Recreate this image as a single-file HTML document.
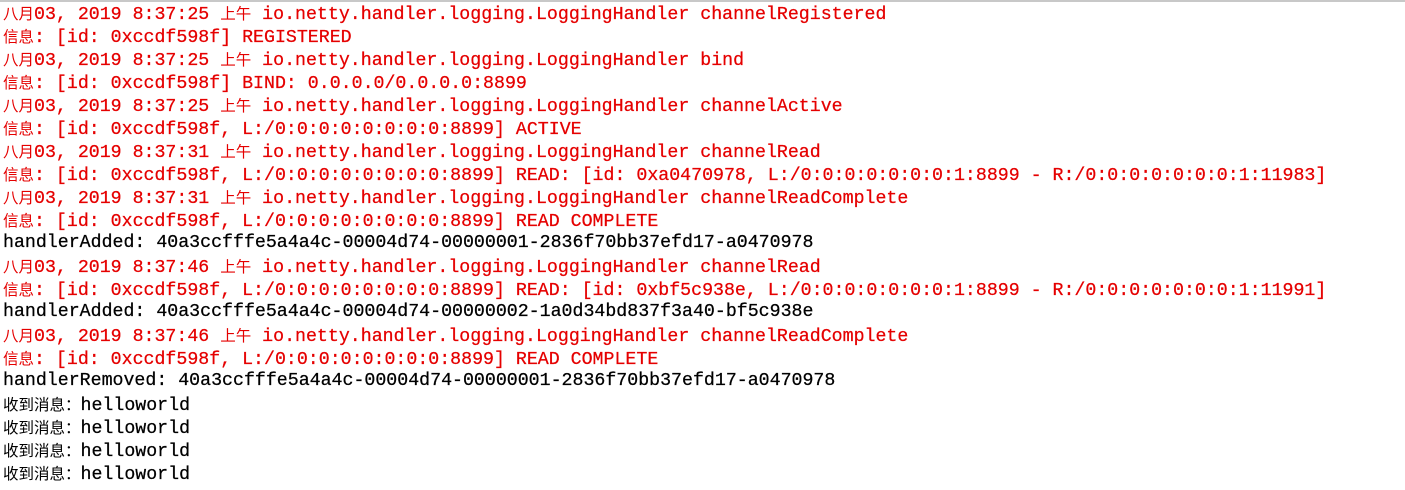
<!DOCTYPE html>
<html><head><meta charset="utf-8"><style>
html,body{margin:0;padding:0;background:#fff;width:1405px;height:490px;overflow:hidden}
body{border-top:2px solid #c8c8c8;box-sizing:border-box}
.c{font-family:"Liberation Mono",monospace;font-size:18.25px;line-height:23px;padding-left:3px;margin-top:0;-webkit-text-stroke:0.25px currentColor}
.l{height:23px;white-space:pre}
.r{color:#e50000}
.k{font-family:"Noto Sans CJK SC","WenQuanYi Zen Hei",sans-serif;font-size:15.5px;-webkit-text-stroke:0}
</style></head><body><div class="c">
<div class="l r"><span class="k">八月</span>03, 2019 8:37:25 <span class="k">上午</span> io.netty.handler.logging.LoggingHandler channelRegistered</div>
<div class="l r"><span class="k">信息</span>: [id: 0xccdf598f] REGISTERED</div>
<div class="l r"><span class="k">八月</span>03, 2019 8:37:25 <span class="k">上午</span> io.netty.handler.logging.LoggingHandler bind</div>
<div class="l r"><span class="k">信息</span>: [id: 0xccdf598f] BIND: 0.0.0.0/0.0.0.0:8899</div>
<div class="l r"><span class="k">八月</span>03, 2019 8:37:25 <span class="k">上午</span> io.netty.handler.logging.LoggingHandler channelActive</div>
<div class="l r"><span class="k">信息</span>: [id: 0xccdf598f, L:/0:0:0:0:0:0:0:0:8899] ACTIVE</div>
<div class="l r"><span class="k">八月</span>03, 2019 8:37:31 <span class="k">上午</span> io.netty.handler.logging.LoggingHandler channelRead</div>
<div class="l r"><span class="k">信息</span>: [id: 0xccdf598f, L:/0:0:0:0:0:0:0:0:8899] READ: [id: 0xa0470978, L:/0:0:0:0:0:0:0:1:8899 - R:/0:0:0:0:0:0:0:1:11983]</div>
<div class="l r"><span class="k">八月</span>03, 2019 8:37:31 <span class="k">上午</span> io.netty.handler.logging.LoggingHandler channelReadComplete</div>
<div class="l r"><span class="k">信息</span>: [id: 0xccdf598f, L:/0:0:0:0:0:0:0:0:8899] READ COMPLETE</div>
<div class="l">handlerAdded: 40a3ccfffe5a4a4c-00004d74-00000001-2836f70bb37efd17-a0470978</div>
<div class="l r"><span class="k">八月</span>03, 2019 8:37:46 <span class="k">上午</span> io.netty.handler.logging.LoggingHandler channelRead</div>
<div class="l r"><span class="k">信息</span>: [id: 0xccdf598f, L:/0:0:0:0:0:0:0:0:8899] READ: [id: 0xbf5c938e, L:/0:0:0:0:0:0:0:1:8899 - R:/0:0:0:0:0:0:0:1:11991]</div>
<div class="l">handlerAdded: 40a3ccfffe5a4a4c-00004d74-00000002-1a0d34bd837f3a40-bf5c938e</div>
<div class="l r"><span class="k">八月</span>03, 2019 8:37:46 <span class="k">上午</span> io.netty.handler.logging.LoggingHandler channelReadComplete</div>
<div class="l r"><span class="k">信息</span>: [id: 0xccdf598f, L:/0:0:0:0:0:0:0:0:8899] READ COMPLETE</div>
<div class="l">handlerRemoved: 40a3ccfffe5a4a4c-00004d74-00000001-2836f70bb37efd17-a0470978</div>
<div class="l"><span class="k">收到消息：</span>helloworld</div>
<div class="l"><span class="k">收到消息：</span>helloworld</div>
<div class="l"><span class="k">收到消息：</span>helloworld</div>
<div class="l"><span class="k">收到消息：</span>helloworld</div>
</div></body></html>
